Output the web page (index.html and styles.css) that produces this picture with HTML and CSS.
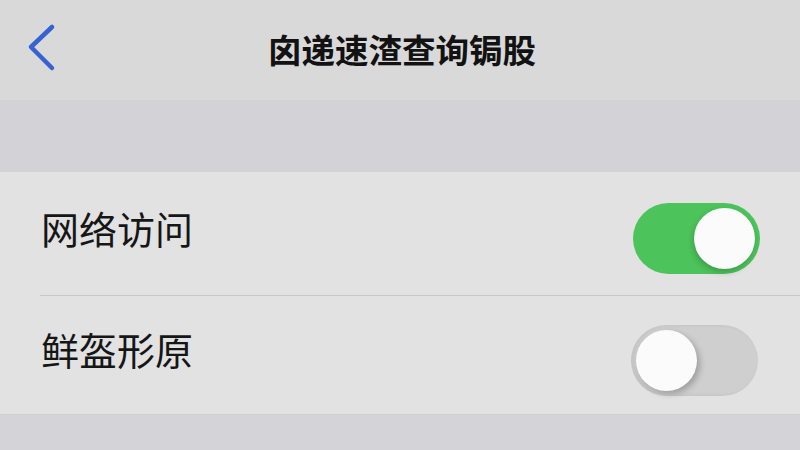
FILE: index.html
```html
<!DOCTYPE html>
<html>

	<head>
		<meta charset="UTF-8">
		<title>设置</title>
		<link rel="stylesheet" href="styles.css">
	</head>

	<body>
		<div class="page">
			<div class="navbar">
				<a href="javascript:;" class="back">
					<svg width="32" height="52" viewBox="0 0 32 52">
						<polyline points="26,6 5,26 26,47" fill="none" stroke="#3762d1" stroke-width="4.5" stroke-linecap="round" stroke-linejoin="round" />
					</svg>
				</a>
				<h1 class="title">囟递速渣查询锔股</h1>
			</div>
			<div class="gap"></div>
			<div class="list">
				<div class="row row_first">
					<span class="label">网络访问</span>
					<span class="switch on"><i class="knob"></i></span>
				</div>
				<div class="line"></div>
				<div class="row row_last">
					<span class="label">鲜盔形原</span>
					<span class="switch"><i class="knob"></i></span>
				</div>
			</div>
			<div class="foot"></div>
		</div>
		<script type="text/javascript">
			var sw = document.getElementsByClassName("switch");
			for(var i = 0; i < sw.length; i++) {
				sw[i].onclick = function() {
					this.classList.toggle("on");
				}
			}
		</script>
	</body>

</html>
```

FILE: styles.css
```css
* {
	margin: 0;
	padding: 0;
}

body {
	font-family: "Noto Sans CJK SC", "Noto Sans", sans-serif;
	color: #111;
}

.page {
	display: flex;
	flex-direction: column;
	width: 800px;
	height: 450px;
	background-color: #d4d3d7;
}

.navbar {
	position: relative;
	display: flex;
	align-items: center;
	justify-content: center;
	height: 100px;
	background-color: #d9d9d9;
}

.back {
	position: absolute;
	left: 26px;
	top: 21px;
}

.title {
	font-size: 33.5px;
	font-weight: 700;
	margin: -3px 0 0 4px;
	color: #121212;
}

.gap {
	height: 72px;
	background-color: #d3d2d6;
}

.list {
	background-color: #e2e2e2;
	border-bottom: 1px solid #cfcfcf;
}

.row {
	display: flex;
	align-items: center;
	justify-content: space-between;
	padding: 0 40px 0 41px;
}

.row_first {
	height: 123px;
}

.row_last {
	height: 118px;
}

.label {
	font-size: 38px;
	font-weight: 400;
	color: #161616;
	margin-top: -12px;
}

.row_last .label {
	margin-top: -14px;
}

.line {
	margin-left: 40px;
	border-top: 1px solid #c8c8c8;
}

.switch {
	position: relative;
	display: block;
	width: 127px;
	height: 71px;
	border-radius: 36px;
	background-color: #cfcfcf;
	box-shadow: inset 2px 0 4px rgba(0, 0, 0, 0.08);
	cursor: pointer;
}

.row_first .switch {
	margin-top: 10px;
}

.row_last .switch {
	margin: 10px 2px 0 0;
}

.switch .knob {
	position: absolute;
	top: 5px;
	left: 5px;
	width: 61px;
	height: 61px;
	border-radius: 50%;
	background-color: #fbfbfb;
	box-shadow: 3px 3px 6px rgba(0, 0, 0, 0.24);
}

.switch.on {
	background-color: #4cc35b;
	box-shadow: none;
}

.switch.on .knob {
	left: 61px;
	box-shadow: -1px 3px 6px rgba(0, 0, 0, 0.2);
}
```
